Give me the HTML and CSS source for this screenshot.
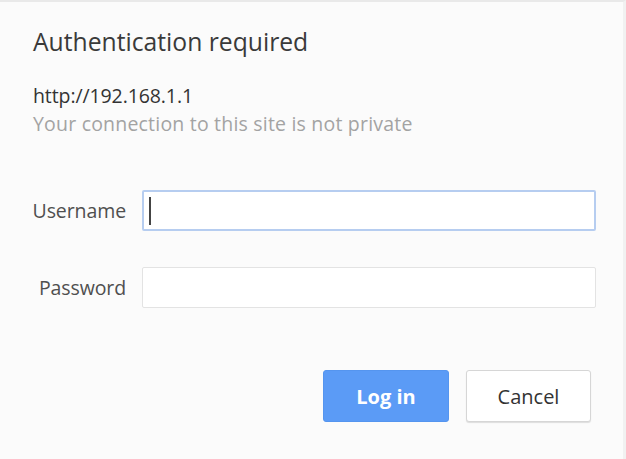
FILE: index.html
```html
<!DOCTYPE html>
<html>
<head>
<meta charset="utf-8">
<link rel="stylesheet" href="styles.css">
</head>
<body>
<div class="dialog">
  <h1 class="title">Authentication required</h1>
  <div class="origin">http://192.168.1.1</div>
  <div class="warning">Your connection to this site is not private</div>
  <form class="fields">
    <label class="label" for="u">Username</label>
    <div class="input focused"><span class="caret"></span></div>
    <label class="label" for="p">Password</label>
    <div class="input"></div>
  </form>
  <div class="actions">
    <button class="btn primary" type="button">Log in</button>
    <button class="btn secondary" type="button">Cancel</button>
  </div>
</div>
</body>
</html>
```

FILE: styles.css
```css
html, body {
  margin: 0;
  padding: 0;
  height: 100%;
  background: #fbfbfb;
}
body {
  font-family: "Open Sans", "Noto Sans", "Liberation Sans", sans-serif;
  color: #333;
}
.dialog {
  box-sizing: border-box;
  height: 459px;
  border-top: 2px solid #e9e9e9;
  border-right: 3px solid #f1f1f1;
  padding: 24px 30px 0 33px;
}
.title {
  margin: 0;
  font-size: 24.7px;
  font-weight: 400;
  line-height: 32px;
  color: #3a3a3a;
}
.origin {
  margin-top: 26px;
  font-size: 19.5px;
  line-height: 24px;
  color: #333;
  letter-spacing: -0.1px;
}
.warning {
  margin-top: 4px;
  font-size: 19.5px;
  line-height: 24px;
  color: #a3a3a3;
  letter-spacing: 0.2px;
}
.fields {
  margin: 54px 0 0 0;
  display: grid;
  grid-template-columns: 93px 454px;
  column-gap: 16px;
  row-gap: 36px;
  align-items: center;
}
.label {
  justify-self: end;
  font-size: 19.5px;
  color: #4f4f4f;
  letter-spacing: -0.1px;
}
.input {
  box-sizing: border-box;
  height: 41px;
  background: #fff;
  border: 1px solid #e3e3e3;
  border-radius: 2px;
  display: flex;
  align-items: center;
  padding-left: 6px;
}
.input.focused {
  border: 2px solid #b6cdf0;
  padding-left: 5px;
}
.caret {
  width: 2px;
  height: 28px;
  background: #444;
}
.actions {
  margin-top: 62px;
  display: flex;
  justify-content: flex-end;
  gap: 17px;
  padding-right: 2px;
}
.btn {
  box-sizing: border-box;
  width: 125px;
  height: 52px;
  border-radius: 3px;
  font-family: "Open Sans", "Noto Sans", sans-serif;
  font-size: 20px;
  cursor: pointer;
}
.primary {
  width: 126px;
  background: #5b9bf6;
  border: 1px solid #5595ef;
  color: #fff;
  font-weight: 700;
}
.secondary {
  background: #fff;
  border: 1px solid #d6d6d6;
  color: #333;
  box-shadow: 0 1px 1px rgba(0,0,0,0.12);
}
```
